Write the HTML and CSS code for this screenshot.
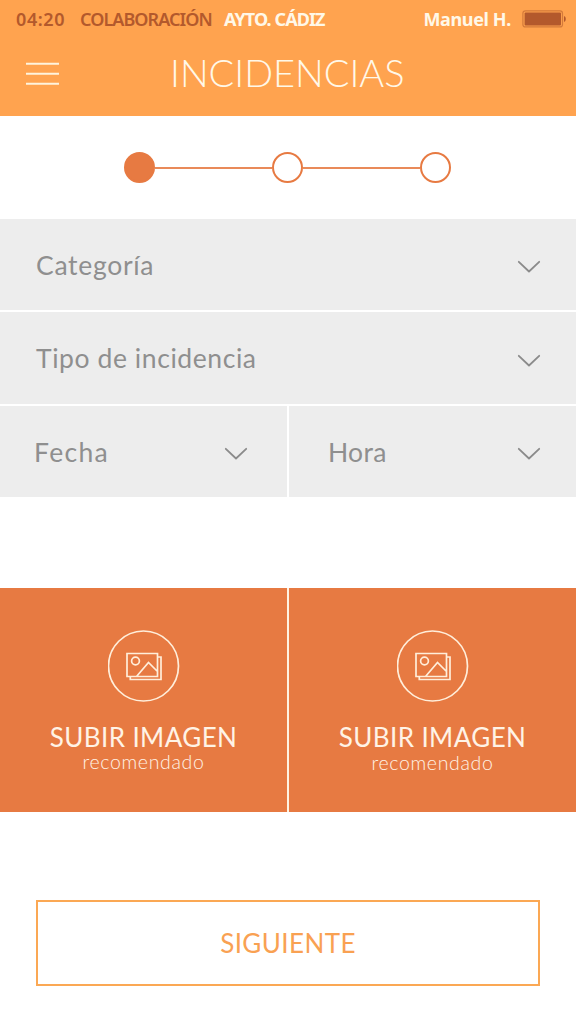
FILE: index.html
```html
<!DOCTYPE html>
<html lang="es">
<head>
<meta charset="utf-8">
<title>Incidencias</title>
<link rel="stylesheet" href="styles.css">
</head>
<body>
<header class="header">
  <div class="status">
    <span class="time">04:20</span>
    <span class="service">COLABORACIÓN</span>
    <span class="city">AYTO. CÁDIZ</span>
    <span class="user">Manuel H.</span>
    <svg class="battery" width="44" height="18" viewBox="0 0 44 18"><rect x=".9" y=".9" width="39.6" height="16" rx="2.5" fill="none" stroke="#d47a3a" stroke-width="1.2"/><rect x="2.6" y="2.6" width="36.4" height="12.8" rx="1" fill="#b3592c"/><path d="M42 6Q43.8 6.5 43.8 9T42 12Z" fill="#b3592c"/></svg>
  </div>
  <div class="bar">
    <svg class="menu" width="33" height="24" viewBox="0 0 33 24"><path d="M0 1.8H33M0 11.8H33M0 21.8H33" stroke="#fff3dc" stroke-width="2"/></svg>
    <h1 class="title">INCIDENCIAS</h1>
  </div>
</header>
<main>
  <div class="steps">
    <span class="step active"></span><span class="line"></span><span class="step"></span><span class="line"></span><span class="step"></span>
  </div>
  <div class="fields">
    <div class="field wide"><span class="category">Categoría</span><svg class="chevron" width="24" height="14" viewBox="0 0 24 14"><path d="M1.8 1.8L12 11.5L22.2 1.8"/></svg></div>
    <div class="field wide"><span class="type">Tipo de incidencia</span><svg class="chevron" width="24" height="14" viewBox="0 0 24 14"><path d="M1.8 1.8L12 11.5L22.2 1.8"/></svg></div>
    <div class="field date"><span class="date-label">Fecha</span><svg class="chevron" width="24" height="14" viewBox="0 0 24 14"><path d="M1.8 1.8L12 11.5L22.2 1.8"/></svg></div>
    <div class="field hour"><span class="hour-label">Hora</span><svg class="chevron" width="24" height="14" viewBox="0 0 24 14"><path d="M1.8 1.8L12 11.5L22.2 1.8"/></svg></div>
  </div>
  <div class="uploads">
    <div class="upload">
      <svg class="photo" width="72" height="72" viewBox="0 0 72 72"><circle cx="35.5" cy="36" r="35"/><path d="M19 23.5H49.5V46.5H19ZM49.5 27H53V49.5H22.3V46.5M28.5 46.5L40.5 32.5L49.5 41.5"/><circle cx="27.5" cy="31" r="3.9"/></svg>
      <span class="upload-title">SUBIR IMAGEN</span>
      <span class="upload-note">recomendado</span>
    </div>
    <div class="upload">
      <svg class="photo" width="72" height="72" viewBox="0 0 72 72"><circle cx="35.5" cy="36" r="35"/><path d="M19 23.5H49.5V46.5H19ZM49.5 27H53V49.5H22.3V46.5M28.5 46.5L40.5 32.5L49.5 41.5"/><circle cx="27.5" cy="31" r="3.9"/></svg>
      <span class="upload-title">SUBIR IMAGEN</span>
      <span class="upload-note lower">recomendado</span>
    </div>
  </div>
  <button class="next">SIGUIENTE</button>
</main>
</body>
</html>
```
FILE: styles.css
```css
* { box-sizing: border-box; }
body { margin: 0; width: 576px; height: 1024px; background: #fff; font-family: Lato, sans-serif; white-space: nowrap; }
.header { height: 116px; background: #ffa34f; }
.status { height: 38px; padding: 0 10px 0 16px; display: flex; align-items: center; font: 600 18px/38px "Noto Sans", sans-serif; color: #b3592c; }
.time { width: 64px; letter-spacing: .6px; }
.service { width: 144px; letter-spacing: -.95px; }
.city { color: #fff8e8; font-weight: 700; letter-spacing: -.9px; }
.user { margin-left: auto; margin-right: 11px; color: #fff8e8; font-weight: 700; letter-spacing: -.35px; }
.bar { height: 70px; padding-left: 26px; display: flex; align-items: center; }
.menu { margin-top: 2px; }
.title { margin: -2px 0 0 111px; font-size: 38px; font-weight: 300; line-height: 70px; color: #fff8e8; }
.steps { height: 103px; padding-right: 1px; display: flex; align-items: center; justify-content: center; }
.step { width: 31px; height: 31px; border: 2px solid #e77a42; border-radius: 50%; }
.active { background: #e77a42; }
.line { width: 117px; height: 2px; background: #e98a59; }
.fields { display: grid; grid-template-columns: 287px 287px; grid-template-rows: 91px 92px 91px; gap: 2px; }
.field { background: #ededed; display: flex; align-items: center; justify-content: space-between; padding: 0 35px 0 36px; font-size: 26.5px; color: #8f8f8f; }
.wide { grid-column: 1 / 3; }
.date { padding: 0 39px 0 34px; }
.hour { padding-left: 39px; }
.category { letter-spacing: .7px; }
.type { letter-spacing: .58px; }
.date-label { letter-spacing: 1.3px; }
.hour-label { letter-spacing: .3px; }
.chevron { margin-top: 5px; fill: none; stroke: #8b8b8b; stroke-width: 1.8; stroke-linecap: round; stroke-linejoin: round; }
.uploads { margin-top: 91px; display: grid; grid-template-columns: 287px 287px; gap: 2px; background: #fff3e2; }
.upload { height: 224px; padding-top: 42px; background: #e77a42; color: #fff3e6; display: flex; flex-direction: column; align-items: center; }
.photo { fill: none; stroke: #ffeeda; stroke-width: 1.7; }
.upload-title { margin-top: 21px; font-size: 26px; line-height: 28px; letter-spacing: .42px; }
.upload-note { margin-top: 0; font-size: 19.5px; font-weight: 300; line-height: 21px; letter-spacing: .65px; }
.lower { margin-top: 1px; }
.next { display: block; width: 504px; height: 86px; margin: 88px 0 0 36px; padding: 0; border: 2px solid #fba854; background: #fff; color: #f9a152; font: 400 26px Lato, sans-serif; letter-spacing: .4px; }
```
